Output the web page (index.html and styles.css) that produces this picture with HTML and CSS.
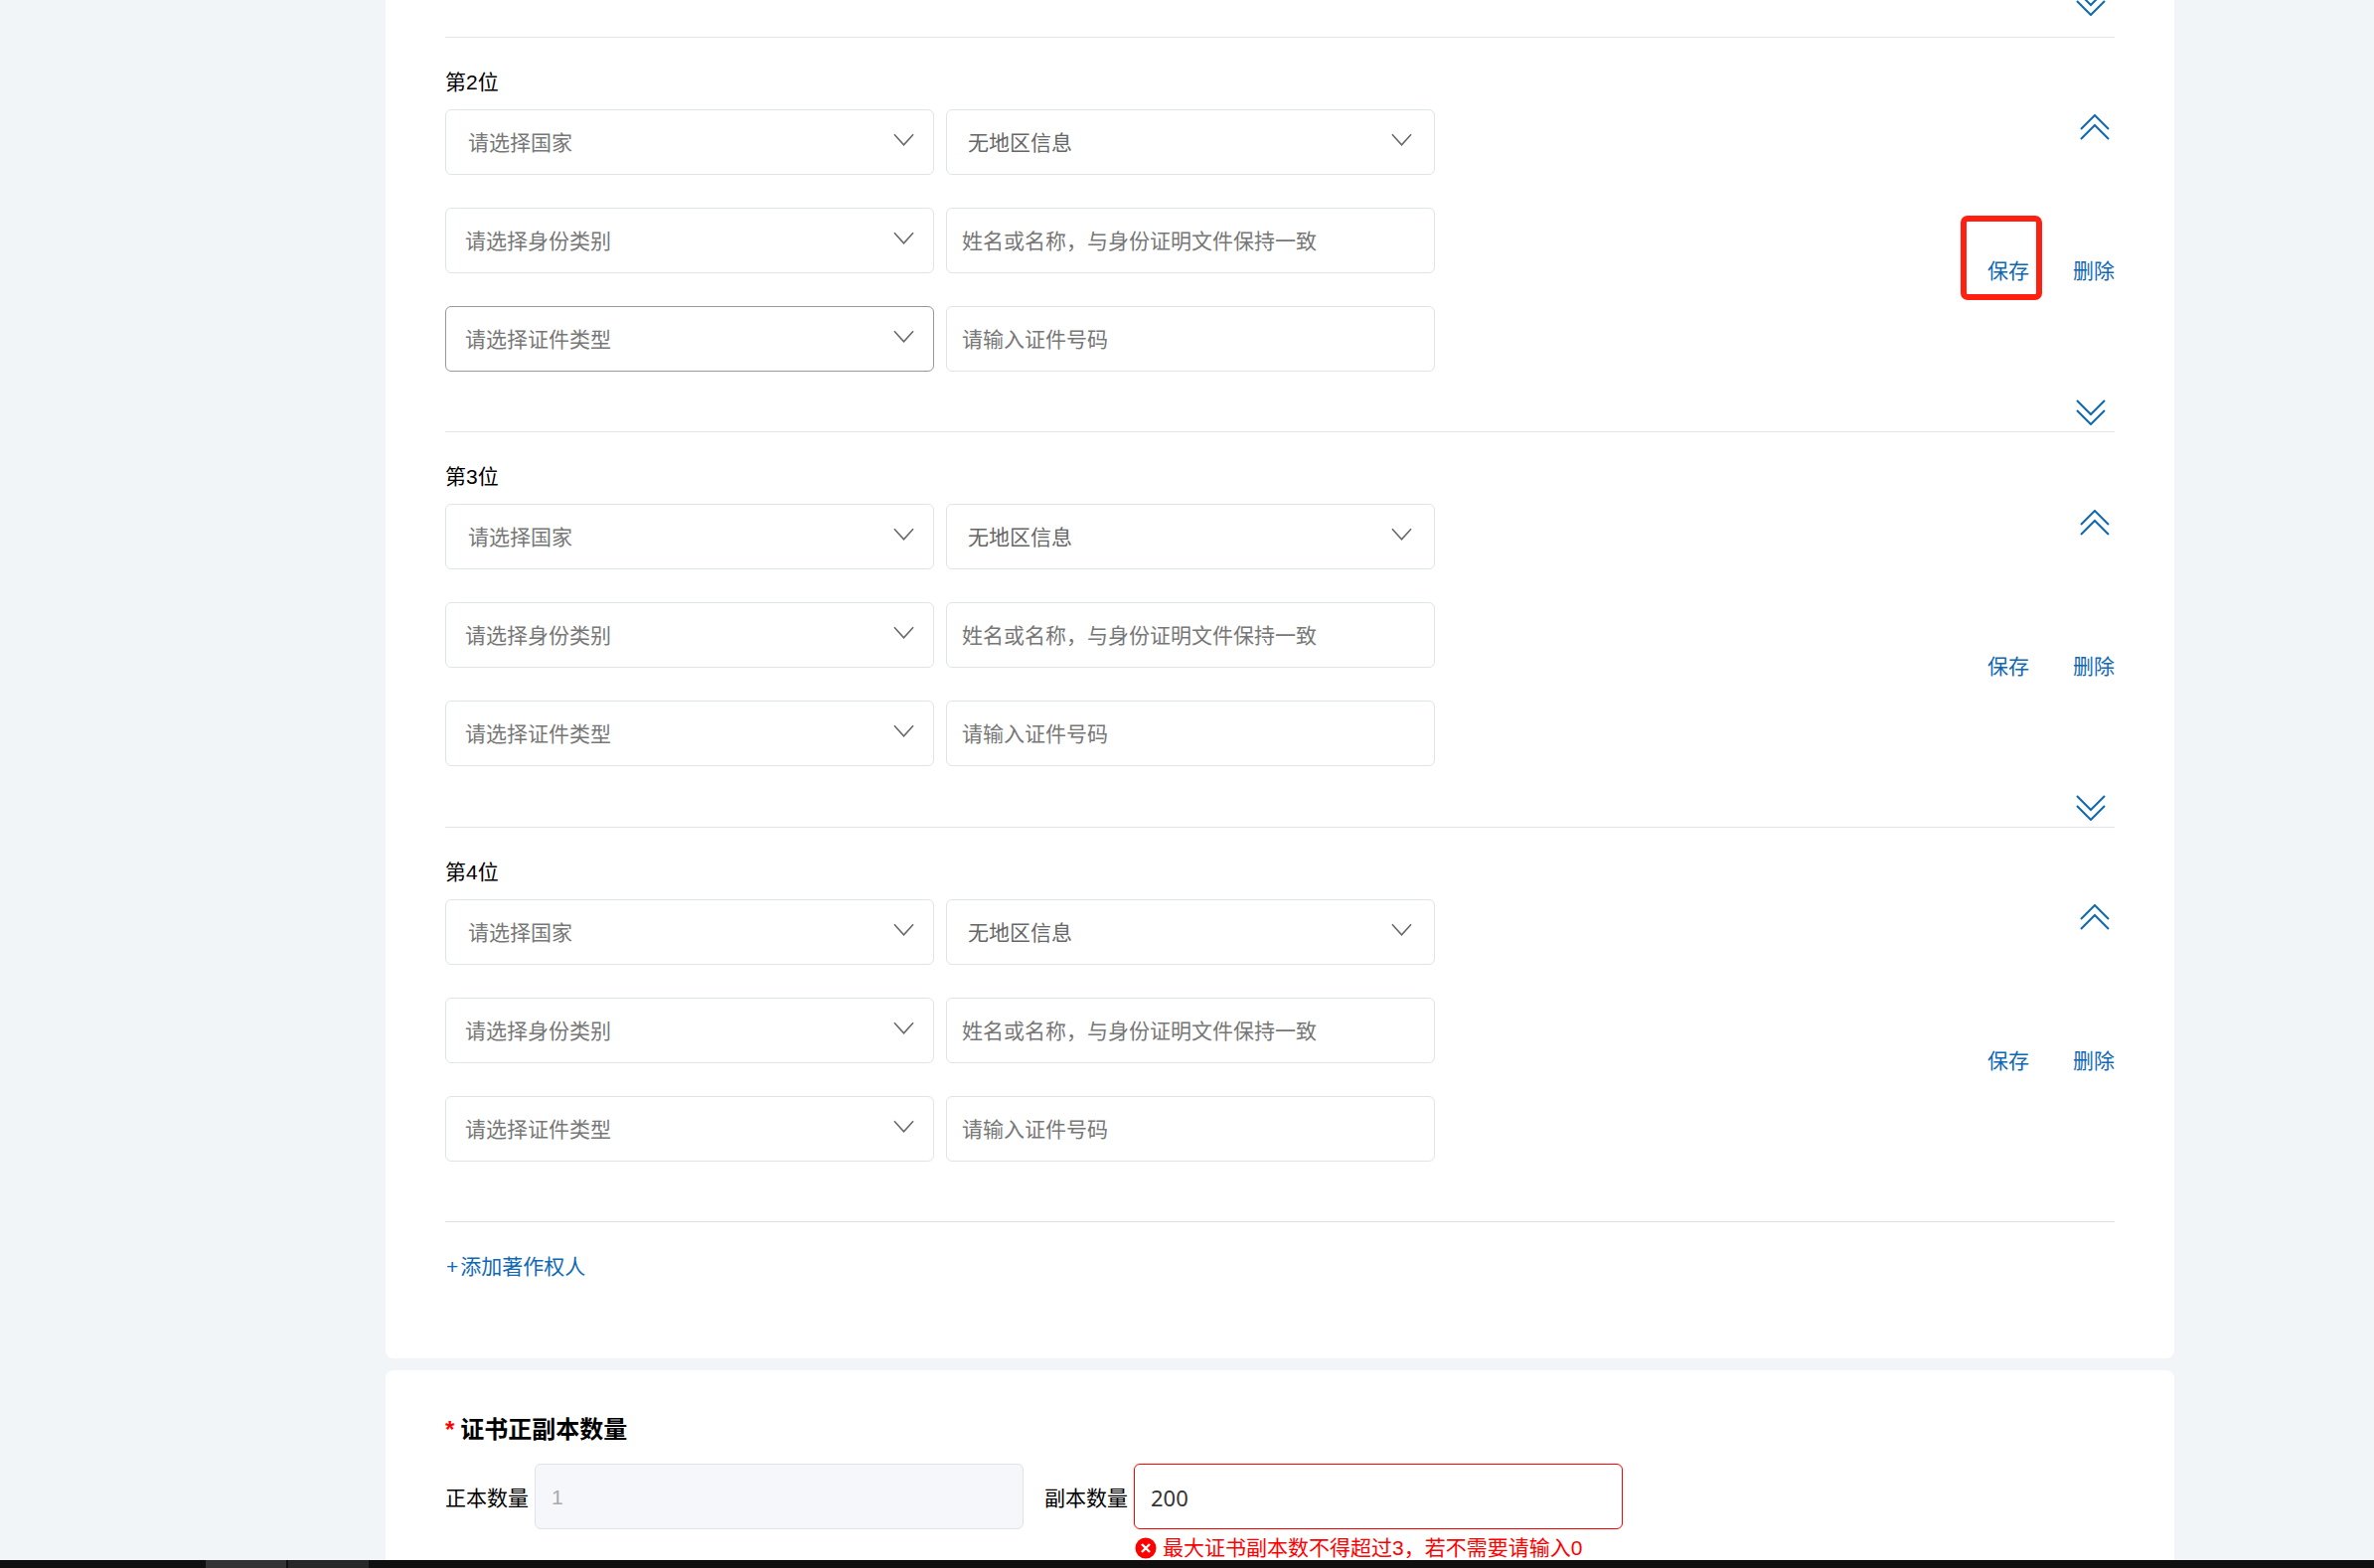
FILE: index.html
```html
<!DOCTYPE html>
<html lang="zh-CN">
<head>
	<meta charset="UTF-8">
	<title>著作权人信息</title>
	<link rel="stylesheet" href="styles.css">
</head>
<body>
	<div class="page">
		<div class="card owners">
			<div class="stub">
				<svg class="chevron down" viewBox="0 0 30 26"><path d="M1 1L15 15L29 1M1 11L15 25L29 11"/></svg>
			</div>

			<div class="owner">
				<div class="fields">
					<div class="owner-title">第2位</div>
					<div class="row">
						<div class="box select country"><span>请选择国家</span><svg class="arrow" viewBox="0 0 22 13"><path d="M1 1L11 12L21 1"/></svg></div>
						<div class="box select region"><span>无地区信息</span><svg class="arrow" viewBox="0 0 22 13"><path d="M1 1L11 12L21 1"/></svg></div>
					</div>
					<div class="row">
						<div class="box select"><span>请选择身份类别</span><svg class="arrow" viewBox="0 0 22 13"><path d="M1 1L11 12L21 1"/></svg></div>
						<div class="box text">姓名或名称，与身份证明文件保持一致</div>
					</div>
					<div class="row">
						<div class="box select active"><span>请选择证件类型</span><svg class="arrow" viewBox="0 0 22 13"><path d="M1 1L11 12L21 1"/></svg></div>
						<div class="box text">请输入证件号码</div>
					</div>
				</div>
				<div class="side">
					<svg class="chevron up" viewBox="0 0 30 26"><path d="M1 15L15 1L29 15M1 25L15 11L29 25"/></svg>
					<div class="actions">
						<a class="save" href="javascript:;">保存<i class="mark"></i></a>
						<a href="javascript:;">删除</a>
					</div>
					<svg class="chevron down" viewBox="0 0 30 26"><path d="M1 1L15 15L29 1M1 11L15 25L29 11"/></svg>
				</div>
			</div>

			<div class="owner">
				<div class="fields">
					<div class="owner-title">第3位</div>
					<div class="row">
						<div class="box select country"><span>请选择国家</span><svg class="arrow" viewBox="0 0 22 13"><path d="M1 1L11 12L21 1"/></svg></div>
						<div class="box select region"><span>无地区信息</span><svg class="arrow" viewBox="0 0 22 13"><path d="M1 1L11 12L21 1"/></svg></div>
					</div>
					<div class="row">
						<div class="box select"><span>请选择身份类别</span><svg class="arrow" viewBox="0 0 22 13"><path d="M1 1L11 12L21 1"/></svg></div>
						<div class="box text">姓名或名称，与身份证明文件保持一致</div>
					</div>
					<div class="row">
						<div class="box select"><span>请选择证件类型</span><svg class="arrow" viewBox="0 0 22 13"><path d="M1 1L11 12L21 1"/></svg></div>
						<div class="box text">请输入证件号码</div>
					</div>
				</div>
				<div class="side">
					<svg class="chevron up" viewBox="0 0 30 26"><path d="M1 15L15 1L29 15M1 25L15 11L29 25"/></svg>
					<div class="actions">
						<a class="save" href="javascript:;">保存</a>
						<a href="javascript:;">删除</a>
					</div>
					<svg class="chevron down" viewBox="0 0 30 26"><path d="M1 1L15 15L29 1M1 11L15 25L29 11"/></svg>
				</div>
			</div>

			<div class="owner">
				<div class="fields">
					<div class="owner-title">第4位</div>
					<div class="row">
						<div class="box select country"><span>请选择国家</span><svg class="arrow" viewBox="0 0 22 13"><path d="M1 1L11 12L21 1"/></svg></div>
						<div class="box select region"><span>无地区信息</span><svg class="arrow" viewBox="0 0 22 13"><path d="M1 1L11 12L21 1"/></svg></div>
					</div>
					<div class="row">
						<div class="box select"><span>请选择身份类别</span><svg class="arrow" viewBox="0 0 22 13"><path d="M1 1L11 12L21 1"/></svg></div>
						<div class="box text">姓名或名称，与身份证明文件保持一致</div>
					</div>
					<div class="row">
						<div class="box select"><span>请选择证件类型</span><svg class="arrow" viewBox="0 0 22 13"><path d="M1 1L11 12L21 1"/></svg></div>
						<div class="box text">请输入证件号码</div>
					</div>
				</div>
				<div class="side">
					<svg class="chevron up" viewBox="0 0 30 26"><path d="M1 15L15 1L29 15M1 25L15 11L29 25"/></svg>
					<div class="actions">
						<a class="save" href="javascript:;">保存</a>
						<a href="javascript:;">删除</a>
					</div>
				</div>
			</div>

			<div class="add-row"><a href="javascript:;"><span class="plus">+</span>添加著作权人</a></div>
		</div>

		<div class="card copies">
			<div class="copies-title"><span class="star">*</span>证书正副本数量</div>
			<div class="copies-row">
				<label class="copies-label">正本数量</label>
				<div class="box number disabled">1</div>
				<label class="copies-label second">副本数量</label>
				<div class="copies-field">
					<div class="box number invalid">200</div>
					<div class="error">
						<svg class="error-icon" viewBox="0 0 22 22"><circle cx="11" cy="11" r="10.5"/><path d="M7 7L15 15M15 7L7 15"/></svg>
						<span>最大证书副本数不得超过3，若不需要请输入0</span>
					</div>
				</div>
			</div>
		</div>
	</div>
	<div class="taskbar">
		<div class="task first"></div>
		<div class="task"></div>
	</div>
</body>
</html>
```

FILE: styles.css
```css
body, div, a, label, span, svg{
	margin: 0;
	padding: 0;
}
a{
	color: #0f68b3;
	text-decoration: none;
}
body{
	background: #f2f5f8;
	color: #000;
	font-family: "Liberation Sans", "Noto Sans CJK SC", sans-serif;
	font-size: 21px;
	line-height: 30px;
	height: 1578px;
	overflow: hidden;
}
.page{
	height: 1570px;
	padding-left: 388px;
	overflow: hidden;
}
.card{
	width: 1800px;
	box-sizing: border-box;
	background: #fff;
	padding: 0 60px;
}
.owners{
	height: 1367px;
	border-radius: 0 0 8px 8px;
}
.stub{
	height: 36.6px;
	display: flex;
	justify-content: flex-end;
}
.stub .chevron{
	margin-top: -10px;
}
.owner{
	height: 397.5px;
	box-sizing: border-box;
	border-top: 1px solid #e1e5e6;
	display: flex;
	justify-content: space-between;
}
.owner-title{
	margin: 30px 0 12px;
}
.row{
	display: flex;
	gap: 12px;
	margin-bottom: 33px;
}
.box{
	width: 492px;
	height: 66px;
	box-sizing: border-box;
	border: 1px solid #dfe5e6;
	border-radius: 6px;
	line-height: 66px;
	color: #777;
}
.select{
	display: flex;
	justify-content: space-between;
	align-items: center;
	padding: 0 19px 0 19px;
}
.select span{
	height: 66px;
	margin-top: 2px;
}
.select.country{
	padding-left: 22px;
}
.select.region{
	padding: 0 22px 0 21px;
	color: #666;
}
.select.active{
	border-color: #999;
}
.arrow{
	width: 21px;
	height: 13px;
	margin-top: -5px;
	fill: none;
	stroke: #666;
	stroke-width: 1.6;
}
.text{
	padding-left: 15px;
}
.side{
	display: flex;
	flex-direction: column;
	align-items: flex-end;
	padding-top: 77.5px;
}
.chevron{
	width: 30px;
	height: 26px;
	flex: none;
	fill: none;
	stroke: #0f68b3;
	stroke-width: 2;
}
.chevron.up{
	margin-right: 5px;
}
.chevron.down{
	margin-right: 9px;
}
.actions{
	display: flex;
	gap: 44px;
	margin: 117px 0 114px;
}
.save{
	position: relative;
}
.mark{
	position: absolute;
	top: -41px;
	left: -27px;
	right: -13px;
	bottom: -14px;
	border: 6px solid #ff2012;
	border-radius: 7px;
}
.add-row{
	border-top: 1px solid #e1e1e1;
	padding: 30px 0 0 1px;
}
.plus{
	margin-right: 2px;
}
.copies{
	margin-top: 12px;
	height: 300px;
	padding-top: 45px;
	border-radius: 8px 8px 0 0;
}
.copies-title{
	font-size: 24px;
	font-weight: bold;
	margin-bottom: 19px;
}
.star{
	color: #f00;
	margin-right: 6px;
}
.copies-row{
	display: flex;
	align-items: flex-start;
}
.copies-label{
	line-height: 70px;
	margin-right: 6px;
}
.copies-label.second{
	margin: 0 6px 0 21px;
}
.number{
	padding-left: 16px;
}
.disabled{
	background: #f5f7fa;
	border-color: #dfe3e8;
	color: #aaa;
}
.invalid{
	border-color: #f00;
	color: #333;
	font-family: "Noto Sans", sans-serif;
	font-size: 22px;
}
.error{
	display: flex;
	align-items: center;
	gap: 6px;
	margin-top: 8px;
	padding-left: 1px;
	color: #f00;
	line-height: 22px;
}
.error-icon{
	width: 22px;
	height: 22px;
	flex: none;
}
.error-icon circle{
	fill: #f00;
}
.error-icon path{
	fill: none;
	stroke: #fff;
	stroke-width: 2.4;
}
.taskbar{
	height: 8px;
	background: #0f0f0f;
	display: flex;
	padding-left: 207px;
	gap: 2px;
}
.task{
	width: 81px;
	background: #272727;
}
.task.first{
	background: #333;
}
```
